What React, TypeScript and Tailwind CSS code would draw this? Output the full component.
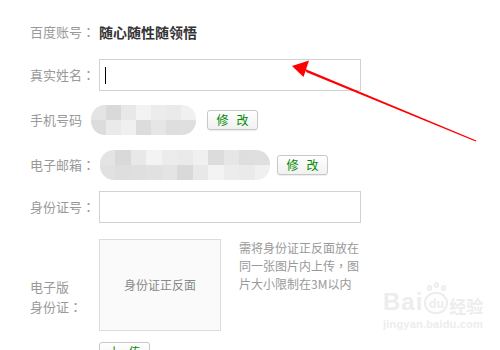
import React from 'react';

// gray mosaic tones used for the blurred-out phone / email
const tones = ['#e4e4e4', '#dcdcdc', '#e8e8e8', '#dedede', '#ececec', '#e1e1e1', '#f0f0f0', '#d9d9d9', '#e6e6e6', '#f3f3f3', '#dfdfdf', '#eaeaea'];

function Mosaic({ cols, className }: { cols: number; className: string }) {
  return (
    <div className={`grid grid-rows-2 overflow-hidden rounded-[14px] blur-[0.6px] ${className}`}
      style={{ gridTemplateColumns: `repeat(${cols}, 1fr)` }}>
      {Array.from({ length: cols * 2 }).map((_, i) => (
        <div key={i} style={{ background: tones[(i * 7 + (i > cols ? 3 : 0)) % tones.length] }} />
      ))}
    </div>
  );
}

function EditButton({ a = '修', b = '改', className = '' }: { a?: string; b?: string; className?: string }) {
  return (
    <button className={`flex h-[20px] w-[51px] items-center justify-center gap-[8px] rounded-[3px] border border-[#c8c8c8] bg-gradient-to-b from-white to-[#f1f1f1] text-[12px] leading-none text-[#008a00] shadow-[0_1px_1px_rgba(0,0,0,0.08)] ${className}`}>
      <span>{a}</span>
      <span>{b}</span>
    </button>
  );
}

// centred full-width punctuation, as in the original page font
const Colon = () => <span className="font-['Noto_Sans_CJK_TC',sans-serif]">：</span>;

const labelCls = 'text-[13px] text-[#999] shrink-0';

export default function App() {
  return (
    <div className="relative h-[350px] w-[500px] overflow-hidden bg-white font-['Noto_Sans_CJK_SC','Noto_Sans',sans-serif]">
      <div className="flex flex-col pl-[30px] pt-[22px]">
        {/* 百度账号 */}
        <div className="flex h-[20px] items-center">
          <span className={`${labelCls} w-[69px]`}>百度账号<Colon /></span>
          <span className="text-[14px] font-bold text-[#333]">随心随性随领悟</span>
        </div>

        {/* 真实姓名 */}
        <div className="mt-[17px] flex h-[32px] items-center">
          <span className={`${labelCls} w-[69px]`}>真实姓名<Colon /></span>
          <div className="flex h-[32px] w-[262px] items-center border border-[#d2d2d2] pl-[5px]">
            <span className="h-[17px] w-px bg-black" />
          </div>
        </div>

        {/* 手机号码 */}
        <div className="mt-[14px] flex h-[30px] items-center">
          <span className={`${labelCls} w-[61px]`}>手机号码</span>
          <Mosaic cols={7} className="h-[30px] w-[105px]" />
          <EditButton className="ml-[11px]" />
        </div>

        {/* 电子邮箱 */}
        <div className="mt-[15px] flex h-[30px] items-center">
          <span className={`${labelCls} w-[70px]`}>电子邮箱<Colon /></span>
          <Mosaic cols={11} className="h-[30px] w-[170px]" />
          <EditButton className="ml-[7px]" />
        </div>

        {/* 身份证号 */}
        <div className="mt-[11px] flex h-[32px] items-center">
          <span className={`${labelCls} w-[69px]`}>身份证号<Colon /></span>
          <div className="h-[32px] w-[262px] border border-[#d2d2d2]" />
        </div>

        {/* 电子版身份证 */}
        <div className="mt-[16px] flex items-start">
          <div className={`${labelCls} w-[69px] pt-[38px] leading-[20px]`}>
            电子版<br />身份证<Colon />
          </div>
          <div className="flex h-[92px] w-[122px] shrink-0 items-center justify-center border border-[#dcdcdc] bg-[#fafafa] text-[12px] text-[#888]">
            身份证正反面
          </div>
          <div className="ml-[18px] text-[12px] leading-[18px] text-[#999]">
            需将身份证正反面放在<br />同一张图片内上传<span className="font-['Noto_Sans_CJK_TC',sans-serif]">，</span>图<br />片大小限制在3M以内
          </div>
        </div>

        <div className="mt-[11px] flex pl-[69px]">
          <EditButton a="上" b="传" className="w-[50px]" />
        </div>
      </div>

      {/* red arrow */}
      <svg className="pointer-events-none absolute inset-0" width="500" height="350">
        <polygon points="304,68.6 476.3,140.6 475.7,141.4 306.6,72.2" fill="#f00" />
        <polygon points="292,66 309,60.5 303.5,77" fill="#f00" />
      </svg>

      {/* watermark */}
      <div className="pointer-events-none absolute left-[383px] top-[290px] flex flex-col text-[#ededed]">
        <div className="flex items-end">
          <span className="text-[24px] font-bold leading-none tracking-[1px] font-['Liberation_Sans',sans-serif]">Bai</span>
          <span className="relative mx-[1px] flex h-[22px] w-[24px] items-center justify-center rounded-full border-2 border-[#ededed] text-[12px] font-bold leading-none">
            du
            <span className="absolute -top-[9px] left-[1px] h-[6px] w-[5px] rounded-full border-2 border-[#ededed]" />
            <span className="absolute -top-[12px] left-[8px] h-[6px] w-[5px] rounded-full border-2 border-[#ededed]" />
            <span className="absolute -top-[9px] left-[15px] h-[6px] w-[5px] rounded-full border-2 border-[#ededed]" />
          </span>
          <span className="text-[17px] font-bold leading-none">经验</span>
        </div>
        <span className="mt-[5px] text-[11px] font-bold leading-none tracking-[0.2px] font-['Liberation_Sans',sans-serif]">jingyan.baidu.com</span>
      </div>
    </div>
  );
}
